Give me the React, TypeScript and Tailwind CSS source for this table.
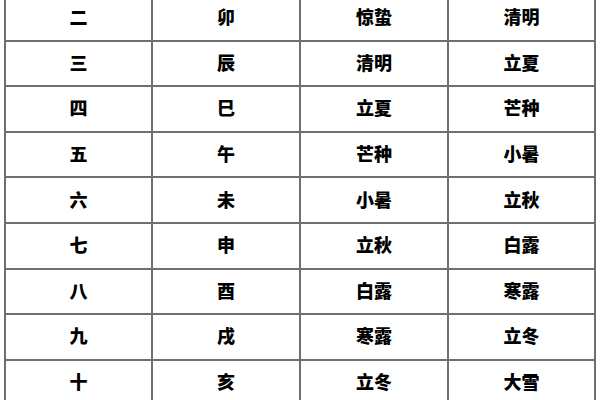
const rows = [
  ["二", "卯", "惊蛰", "清明"],
  ["三", "辰", "清明", "立夏"],
  ["四", "巳", "立夏", "芒种"],
  ["五", "午", "芒种", "小暑"],
  ["六", "未", "小暑", "立秋"],
  ["七", "申", "立秋", "白露"],
  ["八", "酉", "白露", "寒露"],
  ["九", "戌", "寒露", "立冬"],
  ["十", "亥", "立冬", "大雪"],
];

export default function App() {
  return (
    <div className="w-[600px] h-[400px] overflow-hidden bg-white font-['Noto_Sans_CJK_SC','Noto_Sans',sans-serif]">
      <div className="ml-[4px] -mt-[6px] w-[592px] border-l-2 border-t-2 border-[#6f6f6f] grid grid-cols-[147px_148px_148px_147px]">
        {rows.map((row, i) =>
          row.map((cell, j) => (
            <div
              key={`${i}-${j}`}
              className="h-[45.6px] border-r-2 border-b-2 border-[#6f6f6f] flex items-center justify-center pb-[3px] text-[18px] leading-none font-black text-black"
            >
              {cell}
            </div>
          ))
        )}
      </div>
    </div>
  );
}
